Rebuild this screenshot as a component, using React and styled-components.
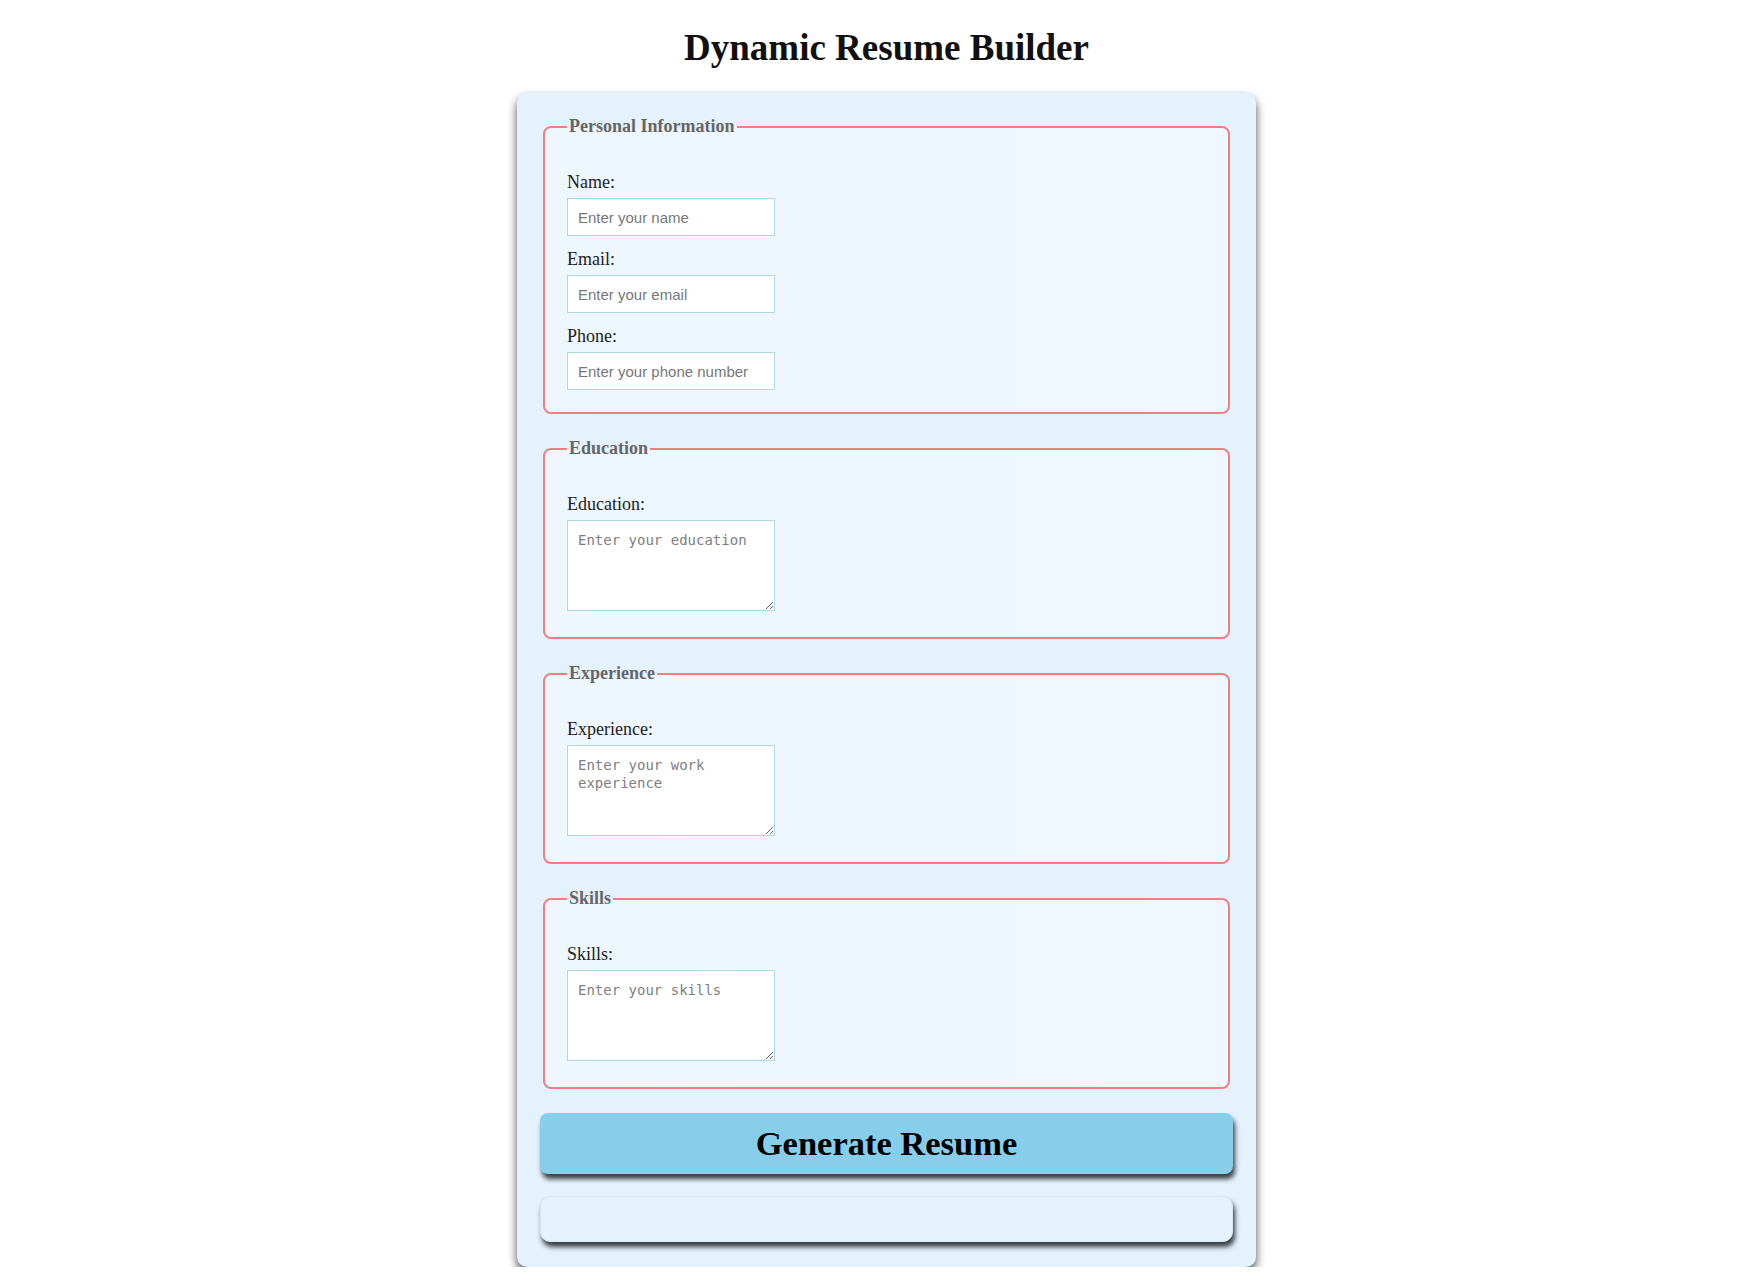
import React from "react";
import styled, { createGlobalStyle } from "styled-components";

const COLOR = {
  WHITE: "#ffffff",
  INK: "#111111",
  CARD: "#e3f2fd",
  SECTION: "#f0f8ff",
  CORAL: "#f08080",
  FIELD_BORDER: "#add8e6",
  SKY: "#87ceeb",
};

const SECTIONS = [
  {
    legend: "Personal Information",
    fields: [
      { id: "name", label: "Name:", type: "text", placeholder: "Enter your name" },
      { id: "email", label: "Email:", type: "email", placeholder: "Enter your email" },
      { id: "phone", label: "Phone:", type: "tel", placeholder: "Enter your phone number" },
    ],
  },
  {
    legend: "Education",
    fields: [{ id: "education", label: "Education:", multiline: true, placeholder: "Enter your education" }],
  },
  {
    legend: "Experience",
    fields: [
      { id: "experience", label: "Experience:", multiline: true, placeholder: "Enter your work experience" },
    ],
  },
  {
    legend: "Skills",
    fields: [{ id: "skills", label: "Skills:", multiline: true, placeholder: "Enter your skills" }],
  },
];

function App() {
  return (
    <>
      <GlobalStyle />
      <Page>
        <Heading>Dynamic Resume Builder</Heading>
        <FormCard onSubmit={(event) => event.preventDefault()}>
          {SECTIONS.map((section) => (
            <Section key={section.legend}>
              <Legend>{section.legend}</Legend>
              {section.fields.map((field) => (
                <React.Fragment key={field.id}>
                  <FieldLabel htmlFor={field.id}>{field.label}</FieldLabel>
                  {field.multiline ? (
                    <TextArea id={field.id} placeholder={field.placeholder} />
                  ) : (
                    <TextInput id={field.id} type={field.type} placeholder={field.placeholder} />
                  )}
                </React.Fragment>
              ))}
            </Section>
          ))}
          <GenerateButton type="submit">Generate Resume</GenerateButton>
          <ResultBox />
        </FormCard>
      </Page>
    </>
  );
}

const GlobalStyle = createGlobalStyle`
  body {
    margin: 0;
    background-color: ${COLOR.WHITE};
    font-family: "Liberation Serif", "Times New Roman", serif;
  }
`;

const Page = styled.div`
  display: flex;
  flex-direction: column;
  align-items: center;
  padding-left: 18px;
`;

const Heading = styled.h1`
  margin: 27px 0 24px;
  font-size: 37px;
  line-height: 42px;
  font-weight: bold;
  color: ${COLOR.INK};
`;

const FormCard = styled.form`
  box-sizing: border-box;
  display: flex;
  flex-direction: column;
  width: 739px;
  padding: 23px 23px 25px;
  background-color: ${COLOR.CARD};
  border-radius: 10px;
  box-shadow: 0 5px 10px rgba(0, 0, 0, 0.7);
`;

const Section = styled.fieldset`
  margin: 0 3px 24px;
  padding: 0 22px 22px;
  border: 2px solid ${COLOR.CORAL};
  border-radius: 8px;
  background: linear-gradient(90deg, #eef6fe, ${COLOR.SECTION});
`;

const Legend = styled.legend`
  padding: 0 2px;
  margin-bottom: 22px;
  font-size: 18px;
  font-weight: bold;
  color: #666666;
`;

const FieldLabel = styled.label`
  display: block;
  margin: 13px 0 5px;
  font-size: 18px;
  color: #222222;
`;

const fieldFont = `"Liberation Sans", Arial, Helvetica, sans-serif`;

const TextInput = styled.input`
  box-sizing: border-box;
  display: block;
  width: 208px;
  height: 38px;
  padding: 10px;
  border: 1px solid ${COLOR.FIELD_BORDER};
  background-color: ${COLOR.WHITE};
  font-family: ${fieldFont};
  font-size: 15px;
  outline: none;

  &::placeholder {
    font-family: ${fieldFont};
    color: #777777;
  }
`;

const TextArea = styled.textarea`
  box-sizing: border-box;
  display: block;
  width: 208px;
  height: 91px;
  margin-bottom: 4px;
  padding: 10px;
  border: 1px solid ${COLOR.FIELD_BORDER};
  background-color: ${COLOR.WHITE};
  font-family: "DejaVu Sans Mono", "Liberation Mono", monospace;
  font-size: 14px;
  line-height: 18px;
  outline: none;

  &::placeholder {
    color: #808080;
  }
`;

const GenerateButton = styled.button`
  box-sizing: border-box;
  width: 100%;
  height: 61px;
  margin-bottom: 22px;
  padding: 0;
  border: none;
  border-radius: 8px;
  background-color: ${COLOR.SKY};
  color: #000000;
  font-family: "Liberation Serif", "Times New Roman", serif;
  font-size: 34.5px;
  font-weight: bold;
  box-shadow: 2px 5px 5px rgba(0, 0, 0, 0.75);
  cursor: pointer;
`;

const ResultBox = styled.div`
  box-sizing: border-box;
  height: 46px;
  border: 1px solid #d6e6f5;
  border-radius: 10px;
  background-color: ${COLOR.CARD};
  box-shadow: 2px 5px 5px rgba(0, 0, 0, 0.75);
`;

export default App;
